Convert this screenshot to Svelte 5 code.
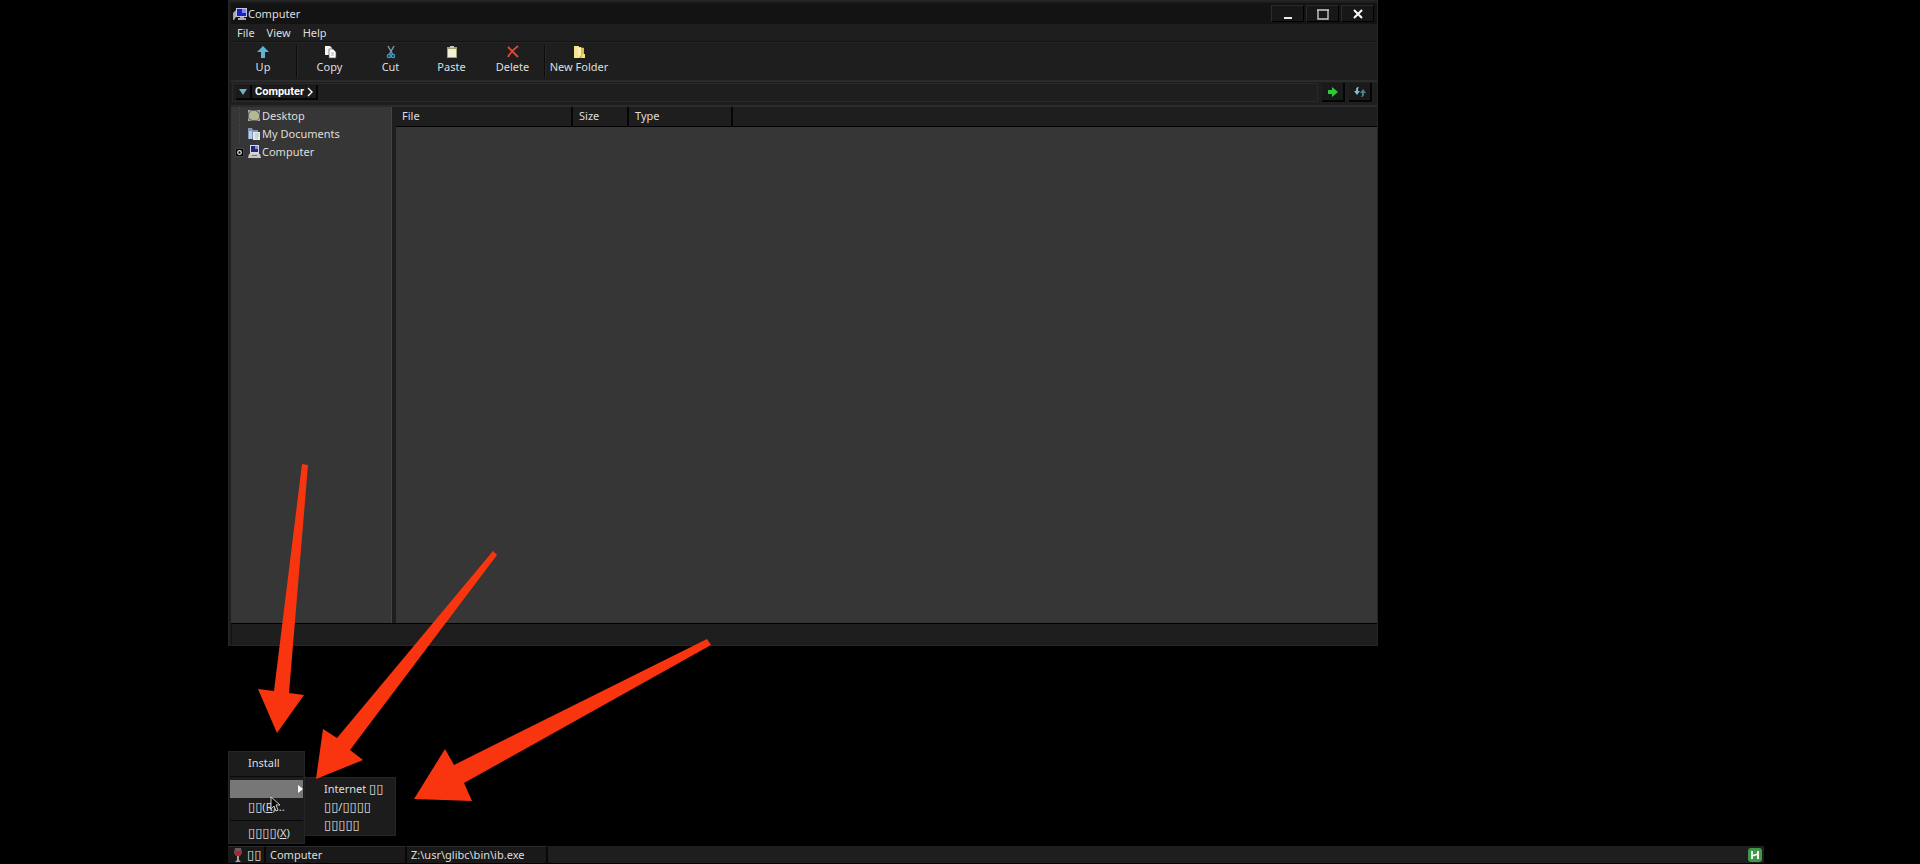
<script>
  // Toolbar groups, split by vertical dividers
  const tools = [
    { id: 'up', label: 'Up' },
    { id: 'copy', label: 'Copy', divider: true },
    { id: 'cut', label: 'Cut' },
    { id: 'paste', label: 'Paste' },
    { id: 'delete', label: 'Delete' },
    { id: 'folder', label: 'New Folder', divider: true }
  ];

  const menus = ['File', 'View', 'Help'];

  const tree = [
    { id: 'desktop', label: 'Desktop' },
    { id: 'documents', label: 'My Documents' },
    { id: 'computer', label: 'Computer', expandable: true }
  ];

  const arrows = [
    '302,464 308,465 289,693 304,695 277,733 258,689 274,691',
    '493,551 497,555 350,750 363,760 316,779 323,729 337,738',
    '707,639 711,645 464,783 472,801 414,799 445,749 454,765'
  ];
</script>

<div class="desktop">
  <main class="window">
    <header class="titlebar">
      <svg class="title-icon" width="15" height="14" viewBox="0 0 15 14">
        <path d="M0 13V6l3-3v7l-2 3z" fill="#a8a8a8" />
        <path d="M3 1h11v9H3z" fill="#c4c4da" />
        <path d="M4 2h9v7H4z" fill="#1d1dc4" />
        <path d="M9 2h4v4H9z" fill="#7d86ff" />
        <path d="M7 10h4v1h2v2H5v-2h2z" fill="#a9a9a9" />
      </svg>
      <h1>Computer</h1>
      <div class="window-buttons">
        <button aria-label="Minimize">
          <svg width="14" height="12" viewBox="0 0 14 12"><path d="M3 9h8v2H3z" fill="#eee" /></svg>
        </button>
        <button aria-label="Maximize">
          <svg width="14" height="12" viewBox="0 0 14 12">
            <path d="M2 2h10v9H2z M1 2h12" fill="none" stroke="#ccc" stroke-width="1.4" />
          </svg>
        </button>
        <button aria-label="Close">
          <svg width="14" height="12" viewBox="0 0 14 12">
            <path d="M3 2l8 8M11 2l-8 8" stroke="#fff" stroke-width="2" />
          </svg>
        </button>
      </div>
    </header>

    <nav class="menubar">
      {#each menus as menu}
        <button>{menu}</button>
      {/each}
    </nav>

    <div class="toolbar">
      {#each tools as tool}
        {#if tool.divider}<span class="divider"></span>{/if}
        <button class="tool {tool.id}">
          <svg width="14" height="14" viewBox="0 0 14 14">
            {#if tool.id === 'up'}
              <path d="M7 1l6 6H9v6H5V7H1z" fill="#5fb4cf" />
            {:else if tool.id === 'copy'}
              <path d="M2 1h5l2 2v7H2z" fill="#f4f4f4" />
              <path d="M6 4h4l3 3v6H6z" fill="#fff" stroke="#555" stroke-width=".7" />
              <path d="M8 8h3M8 10h3" stroke="#999" stroke-width=".8" />
            {:else if tool.id === 'cut'}
              <path d="M4 1l5 9M10 1L5 10" stroke="#7695a8" stroke-width="1.5" />
              <circle cx="5" cy="11" r="1.6" fill="none" stroke="#3b9dca" stroke-width="1.4" />
              <circle cx="9" cy="11" r="1.6" fill="none" stroke="#3b9dca" stroke-width="1.4" />
            {:else if tool.id === 'paste'}
              <path d="M2 2h10v11H2z" fill="#a49e69" />
              <path d="M3 4h8v8H3z" fill="#f1f0dc" />
              <path d="M5 1h4v2H5z" fill="#c9c9b2" />
            {:else if tool.id === 'delete'}
              <path d="M2 2c3 3 6 6 10 10M12 1C8 4 4 8 2 12" fill="none" stroke="#d94a3c" stroke-width="1.8" />
            {:else}
              <path d="M2 1h5v12H2z" fill="#f7e68f" />
              <path d="M7 2l5 1v10H7z" fill="#dfbd4c" />
              <path d="M6 3l3-1v8l-3 3z" fill="#fff2ae" />
              <path d="M10 9h3v4h-3z" fill="#f6df79" />
            {/if}
          </svg>
          <span>{tool.label}</span>
        </button>
      {/each}
    </div>

    <div class="address">
      <div class="path">
        <button class="history" aria-label="Recent locations">
          <svg width="8" height="6" viewBox="0 0 8 6"><path d="M0 0h8L4 6z" fill="#6cb2c8" /></svg>
        </button>
        <button class="crumb">
          Computer
          <svg width="6" height="10" viewBox="0 0 6 10"><path d="M1 1l4 4-4 4" fill="none" stroke="#fff" stroke-width="1.4" /></svg>
        </button>
      </div>
      <button class="action" aria-label="Go">
        <svg width="12" height="12" viewBox="0 0 12 12">
          <path d="M1 4h4V1l6 5-6 5V8H1z" fill="#2fc935" />
        </svg>
      </button>
      <button class="action" aria-label="Refresh">
        <svg width="12" height="12" viewBox="0 0 12 12">
          <path d="M5 1C2 1 2 3 2 5H0l3 4 3-4H4c0-2 0-3 1-4z" fill="#83bed6" />
          <path d="M7 11c3 0 3-2 3-4h2L9 3 6 7h2c0 2 0 3-1 4z" fill="#4b8299" />
        </svg>
      </button>
    </div>

    <div class="panes">
      <ul class="tree">
        {#each tree as node}
          <li>
            {#if node.expandable}
              <button class="expander" aria-label="Expand">
                <svg width="7" height="7" viewBox="0 0 7 7"><circle cx="3.5" cy="3.5" r="1.8" fill="#000" stroke="#eee" stroke-width="1.2" /></svg>
              </button>
            {:else}
              <span class="branch"></span>
            {/if}
            <svg width="14" height="14" viewBox="0 0 14 14">
              {#if node.id === 'desktop'}
                <path d="M1 1h12v11H1z" fill="#666" />
                <path d="M4 2h5l3 3v4l-2 2H5L2 9V5z" fill="#b4b893" />
                <path d="M1 1h3L1 4zM13 1v3l-3-3zM1 12V9l3 3zM13 12h-3l3-3z" fill="#aaa" />
              {:else if node.id === 'documents'}
                <path d="M1 1h4l1 2h5v9H1z" fill="#8194b8" />
                <path d="M2 4h3v8H2z" fill="#b6caeb" />
                <path d="M6 5h7v8H6z" fill="#e5ece6" />
                <path d="M8 7h4M8 9h4M8 11h3" stroke="#9db5c4" stroke-width=".8" />
              {:else}
                <path d="M3 0h9v9H3z" fill="#d9d9dd" />
                <path d="M4 1h7v6H4z" fill="#20297f" />
                <path d="M8 1h3v3H8z" fill="#7f8fe0" />
                <path d="M2 9h11l1 4H1z" fill="#c6c6c6" />
                <path d="M5 10h5v1H5z" fill="#777" />
              {/if}
            </svg>
            <span>{node.label}</span>
          </li>
        {/each}
      </ul>
      <div class="list">
        <table>
          <thead>
            <tr>
              <th class="col-file">File</th>
              <th class="col-size">Size</th>
              <th class="col-type">Type</th>
              <td></td>
            </tr>
          </thead>
        </table>
      </div>
    </div>

    <footer class="status"></footer>
  </main>

  <div class="start-menu">
    <button class="item">Install</button>
    <hr />
    <div class="parent">
      <button class="item selected" aria-label="Programs">
        <svg width="5" height="8" viewBox="0 0 5 8"><path d="M0 0l5 4-5 4z" fill="#fff" /></svg>
      </button>
      <div class="submenu">
        <button class="item">Internet <span class="box">▯▯</span></button>
        <button class="item"><span class="box">▯▯</span>/<span class="box">▯▯▯▯</span></button>
        <button class="item"><span class="box">▯▯▯▯▯</span></button>
      </div>
    </div>
    <button class="item"><span class="box">▯▯</span>(<u>R</u>)...</button>
    <hr />
    <button class="item"><span class="box">▯▯▯▯</span>(<u>X</u>)</button>
  </div>

  <div class="taskbar">
    <button class="start">
      <svg width="10" height="16" viewBox="0 0 10 16">
        <path d="M2 1h6l1 5-2 3H3L1 6z" fill="#6d5b5c" />
        <path d="M2 4h6v3L6 9H4L2 7z" fill="#b3202f" />
        <path d="M4 9h2v4l2 2H2l2-2z" fill="#a9a1a1" />
      </svg>
      <span class="box">▯▯</span>
    </button>
    <button class="task">Computer</button>
    <button class="task">Z:\usr\glibc\bin\ib.exe</button>
    <svg class="tray" width="14" height="14" viewBox="0 0 14 14">
      <rect width="14" height="14" rx="3" fill="#3f9a48" />
      <path d="M4 3v8M10 3v8M4 8l6-2" fill="none" stroke="#fff" stroke-width="1.8" />
    </svg>
  </div>

  <svg class="cursor" width="10" height="16" viewBox="0 0 10 16">
    <path d="M1 1v12l3-3 2 5 2-1-2-5h4z" fill="#080808" stroke="#ddd" stroke-width=".9" />
  </svg>

  <svg class="arrows" width="1536" height="864" viewBox="228 0 1536 864">
    {#each arrows as points}
      <polygon {points} fill="#f93510" />
    {/each}
  </svg>
</div>

<style>
  :global(body) {
    background: #000;
  }

  .desktop {
    position: relative;
    display: flex;
    flex-direction: column;
    justify-content: space-between;
    height: 100vh;
    margin: 0 156px 0 228px;
    color: #dedede;
    font: 11px/18px 'Noto Sans', sans-serif;
  }

  .desktop * {
    box-sizing: border-box;
  }

  button {
    margin: 0;
    padding: 0;
    border: 0;
    background: none;
    color: inherit;
    font: inherit;
    white-space: nowrap;
  }

  svg {
    display: block;
    flex: none;
  }

  .window {
    display: flex;
    flex-direction: column;
    width: 75%;
    max-width: 1150px;
    height: calc(75vh - 2px);
    padding: 2px 0 0 2px;
    background: #1e1e1e;
    border: 1px solid #262626;
  }

  .titlebar {
    display: flex;
    align-items: center;
    height: 21px;
    padding-left: 2px;
    background: #131313;
  }

  h1 {
    flex: 1;
    margin: 0;
    font-size: 11px;
    font-weight: 400;
  }

  .window-buttons {
    display: flex;
    gap: 2px;
    padding-right: 3px;
  }

  .window-buttons button {
    display: flex;
    align-items: center;
    justify-content: center;
    width: 33px;
    height: 17px;
    background: #171717;
    border: 1px solid #2c2c2c;
    border-right-color: #000;
    border-bottom-color: #000;
  }

  .menubar {
    display: flex;
    gap: 12px;
    height: 18px;
    padding: 1px 6px 0;
    border-bottom: 1px solid #121212;
  }

  .menubar button {
    line-height: 16px;
  }

  .toolbar {
    display: flex;
    height: 38px;
    border-top: 1px solid #262626;
  }

  .tool {
    display: flex;
    flex-direction: column;
    align-items: center;
    width: 61px;
    padding-top: 2px;
    line-height: 16px;
  }

  .divider {
    width: 2px;
    margin: 3px 1px 2px;
    background: #0c0c0c;
    border-right: 1px solid #282828;
  }

  .tool.up,
  .tool.folder {
    width: 64px;
  }

  .address {
    display: flex;
    gap: 4px;
    height: 27px;
    padding: 1px 5px 3px 1px;
    border-top: 2px solid #2b2b2b;
    border-bottom: 2px solid #2b2b2b;
  }

  .path {
    display: flex;
    flex: 1;
    padding: 1px 3px;
    border: 1px solid #292929;
  }

  .history,
  .crumb,
  .action {
    display: flex;
    align-items: center;
    justify-content: center;
    background: #1a1a1a;
    border-right: 2px solid #050505;
    border-bottom: 2px solid #050505;
  }

  .history {
    width: 16px;
  }

  .crumb {
    gap: 3px;
    padding: 0 3px;
    color: #fff;
    font: bold 11px/16px Roboto, sans-serif;
  }

  .action {
    width: 23px;
  }

  .panes {
    display: flex;
    flex: 1;
    min-height: 0;
  }

  .tree {
    width: 161px;
    margin: 0;
    padding: 0 0 0 4px;
    background: #363636;
    border-right: 1px solid #454545;
    list-style: none;
  }

  .tree li {
    display: flex;
    align-items: center;
    height: 18px;
  }

  .tree li > svg {
    margin-right: 1px;
  }

  .branch {
    align-self: stretch;
    width: 8px;
    margin-left: 4px;
    border-left: 1px dotted #444;
  }

  .expander {
    width: 9px;
    height: 9px;
    margin-right: 3px;
    background: #000;
    border: 1px solid #444;
  }

  .list {
    flex: 1;
    margin-left: 4px;
    background: #363636;
  }

  table {
    width: 100%;
    border-collapse: collapse;
    table-layout: fixed;
  }

  th,
  td {
    height: 19px;
    padding: 0 6px;
    background: #1e1e1e;
    border-bottom: 1px solid #000;
  }

  th {
    border-right: 2px solid #060606;
    font-weight: 400;
    text-align: left;
  }

  .col-file {
    width: 176px;
  }

  .col-size {
    width: 56px;
  }

  .col-type {
    width: 104px;
  }

  .status {
    height: 22px;
    border-top: 1px solid #000;
    border-left: 1px solid #111;
  }

  .start-menu,
  .submenu {
    position: absolute;
    padding: 2px 1px 1px;
    background: #1c1c1c;
    border: 1px solid #262626;
  }

  .start-menu {
    bottom: 20px;
    left: 0;
    width: 77px;
  }

  .parent {
    position: relative;
  }

  .submenu {
    top: -3px;
    left: 74px;
    width: 92px;
  }

  .item {
    display: block;
    width: 100%;
    height: 18px;
    padding-left: 18px;
    text-align: left;
  }

  .item.selected {
    display: flex;
    align-items: center;
    justify-content: flex-end;
    background: #777;
  }

  hr {
    height: 1px;
    margin: 4px 0 3px;
    background: #0a0a0a;
    border: 0;
  }

  .box {
    font-family: 'DejaVu Sans', sans-serif;
    font-size: 13px;
  }

  .taskbar {
    display: flex;
    height: 18px;
    padding-right: 2px;
    background: #1e1e1e;
    border-bottom: 1px solid #000;
  }

  .start,
  .task {
    background: #191919;
    border-top: 1px solid #2a2a2a;
    border-right: 2px solid #080808;
    line-height: 16px;
  }

  .start {
    display: flex;
    align-items: center;
    gap: 4px;
    width: 38px;
    padding-left: 5px;
  }

  .task {
    width: 141px;
    padding-left: 4px;
    text-align: left;
  }

  .tray {
    align-self: center;
    margin-left: auto;
  }

  .cursor {
    position: absolute;
    left: 42px;
    bottom: 52px;
  }

  .arrows {
    position: absolute;
    top: 0;
    left: 0;
    pointer-events: none;
  }
</style>
